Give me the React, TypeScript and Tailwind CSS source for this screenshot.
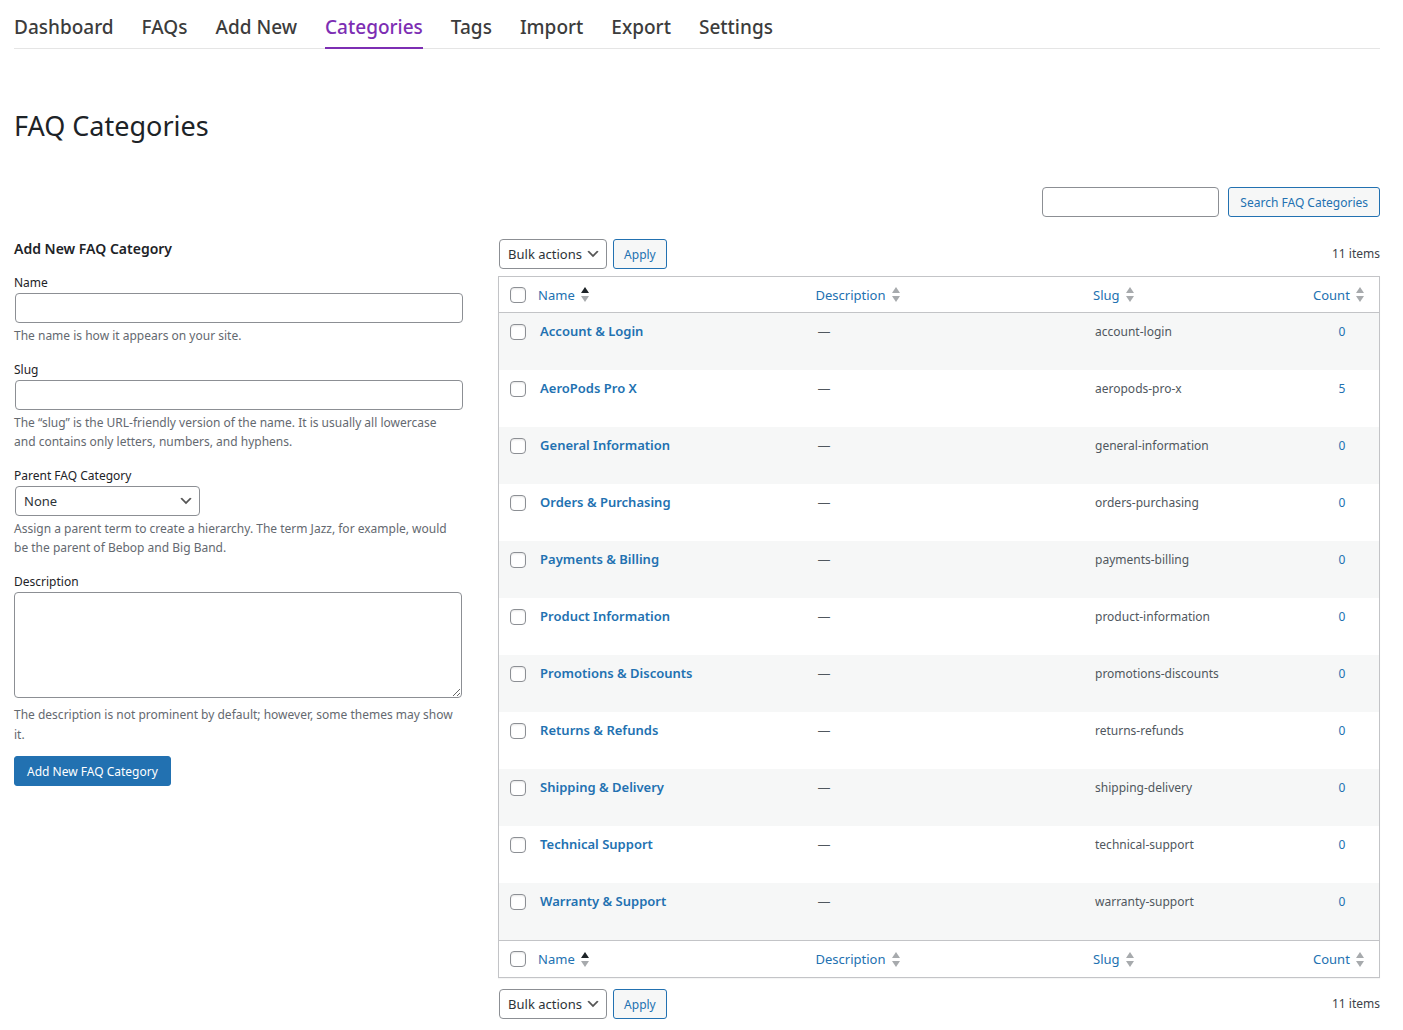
import type { ReactNode } from "react";

const navItems = ["Dashboard", "FAQs", "Add New", "Categories", "Tags", "Import", "Export", "Settings"];

const categories = [
  { name: "Account & Login", slug: "account-login", count: 0 },
  { name: "AeroPods Pro X", slug: "aeropods-pro-x", count: 5 },
  { name: "General Information", slug: "general-information", count: 0 },
  { name: "Orders & Purchasing", slug: "orders-purchasing", count: 0 },
  { name: "Payments & Billing", slug: "payments-billing", count: 0 },
  { name: "Product Information", slug: "product-information", count: 0 },
  { name: "Promotions & Discounts", slug: "promotions-discounts", count: 0 },
  { name: "Returns & Refunds", slug: "returns-refunds", count: 0 },
  { name: "Shipping & Delivery", slug: "shipping-delivery", count: 0 },
  { name: "Technical Support", slug: "technical-support", count: 0 },
  { name: "Warranty & Support", slug: "warranty-support", count: 0 },
];

const inputClass = "block h-[30px] rounded border border-[#8c8f94] bg-white px-2 text-[13px] text-[#2c3338]";
const buttonClass =
  "h-[30px] rounded-[3px] border border-[#2271b1] bg-[#f6f7f7] pt-0.5 text-[12px] whitespace-nowrap text-[#2271b1]";

function Select({ id, label, options, className }: { id: string; label?: string; options: string[]; className: string }) {
  return (
    <div className={`relative ${className}`}>
      <select id={id} aria-label={label} className={`${inputClass} w-full appearance-none pt-px pr-6`}>
        {options.map((option) => (
          <option key={option}>{option}</option>
        ))}
      </select>
      <svg
        className="pointer-events-none absolute top-[7px] right-[6px] size-4"
        viewBox="0 0 20 20"
        fill="#555"
        aria-hidden="true"
      >
        <path d="M5 6l5 5 5-5 2 1-7 7-7-7 2-1z" />
      </svg>
    </div>
  );
}

function Checkbox({ label }: { label: string }) {
  return (
    <input
      type="checkbox"
      aria-label={label}
      className="block size-4 appearance-none rounded border border-[#8c8f94] bg-white shadow-[inset_0_1px_2px_rgba(0,0,0,0.1)] checked:bg-[#2271b1]"
    />
  );
}

function SortIcon({ active }: { active?: boolean }) {
  return (
    <svg className="h-[15px] w-2 shrink-0" viewBox="0 0 8 15" aria-hidden="true">
      <path d="M4 0L8 6H0z" fill={active ? "#1d2327" : "#a7aaad"} />
      <path d="M0 9h8L4 15z" fill="#a7aaad" />
    </svg>
  );
}

function HeadingRow({ edge, position }: { edge: string; position: string }) {
  const cell = `p-0 align-middle font-normal ${edge}`;
  const link = "flex items-center gap-[6px] px-2 text-[13px] leading-5 text-[#2271b1]";
  return (
    <tr>
      <td className={`${cell} w-[31px]`}>
        <div className="pl-[11px]">
          <Checkbox label={`Select all, ${position}`} />
        </div>
      </td>
      <th scope="col" className={cell}>
        <a href="#name" className={link}>
          Name <SortIcon active />
        </a>
      </th>
      <th scope="col" className={cell}>
        <a href="#description" className={link}>
          Description <SortIcon />
        </a>
      </th>
      <th scope="col" className={`${cell} w-1/4`}>
        <a href="#slug" className={link}>
          Slug <SortIcon />
        </a>
      </th>
      <th scope="col" className={`${cell} w-[74px]`}>
        <a href="#count" className={link}>
          Count <SortIcon />
        </a>
      </th>
    </tr>
  );
}

function BulkActions({ position }: { position: string }) {
  return (
    <div className="flex items-center justify-between pl-px">
      <div className="flex gap-[6px]">
        <Select
          id={`bulk-${position}`}
          label="Select bulk action"
          options={["Bulk actions", "Delete"]}
          className="w-[108px]"
        />
        <button type="button" className={`${buttonClass} px-[10px]`}>
          Apply
        </button>
      </div>
      <span className="text-[12px] text-[#3c434a]">11 items</span>
    </div>
  );
}

function Field({ id, label, help, children }: { id: string; label: string; help: string; children: ReactNode }) {
  return (
    <div className="mb-[14px]">
      <label htmlFor={id} className="block pt-px text-[12px] leading-5">
        {label}
      </label>
      {children}
      <p className="mt-[3px] pr-1 text-[12px] leading-[19px] text-[#646970]">{help}</p>
    </div>
  );
}

export default function App() {
  return (
    <div className="min-h-screen bg-white pr-[23px] pb-[11px] pl-[14px] font-['Segoe_UI','Noto_Sans',sans-serif] text-[13px] text-[#1d2327]">
      <nav className="flex gap-7 border-b border-[#e5e5e5] pt-[9px]">
        {navItems.map((item) => (
          <a
            key={item}
            href={`#${item.toLowerCase().replace(" ", "-")}`}
            className={`-mb-px border-b-2 pb-0.5 text-[19px] leading-9 font-medium whitespace-nowrap ${
              item === "Categories" ? "border-[#7d2eb3] text-[#7d2eb3]" : "border-transparent text-[#3c3c3c]"
            }`}
          >
            {item}
          </a>
        ))}
      </nav>

      <h1 className="mt-[59px] text-[27px] leading-9 font-normal">FAQ Categories</h1>

      <form className="mt-[43px] flex justify-end gap-[9px]">
        <input type="search" aria-label="Search FAQ Categories" className={`${inputClass} w-[177px]`} />
        <button type="button" className={`${buttonClass} px-[11px]`}>
          Search FAQ Categories
        </button>
      </form>

      <main className="mt-[22px] flex">
        <form className="w-[35%] pr-[30px]">
          <h2 className="mb-[13px] text-[14px] leading-5 font-semibold">Add New FAQ Category</h2>
          <Field id="name" label="Name" help="The name is how it appears on your site.">
            <input id="name" type="text" className={`${inputClass} ml-px w-full`} />
          </Field>
          <Field
            id="slug"
            label="Slug"
            help="The “slug” is the URL-friendly version of the name. It is usually all lowercase and contains only letters, numbers, and hyphens."
          >
            <input id="slug" type="text" className={`${inputClass} ml-px w-full`} />
          </Field>
          <Field
            id="parent"
            label="Parent FAQ Category"
            help="Assign a parent term to create a hierarchy. The term Jazz, for example, would be the parent of Bebop and Big Band."
          >
            <Select id="parent" options={["None"]} className="ml-px w-[185px]" />
          </Field>
          <label htmlFor="description" className="block pt-px text-[12px] leading-5">
            Description
          </label>
          <textarea
            id="description"
            className="block h-[106px] w-full rounded border border-[#8c8f94] px-2 py-1 text-[13px]"
          />
          <p className="mt-[7px] text-[12px] leading-5 text-[#646970]">
            The description is not prominent by default; however, some themes may show it.
          </p>
          <button
            type="button"
            className="mt-[11px] h-[30px] rounded-[3px] border border-[#2271b1] bg-[#2271b1] px-3 pt-0.5 text-[12px] text-white"
          >
            Add New FAQ Category
          </button>
        </form>

        <section className="w-[65%] pl-[6px]">
          <BulkActions position="top" />
          <table className="mt-[7px] mb-[11px] w-full table-fixed border-separate border-spacing-0 border border-[#c3c4c7] text-left shadow-[0_1px_1px_rgba(0,0,0,0.04)]">
            <thead>
              <HeadingRow edge="h-9 border-b border-[#c3c4c7]" position="top" />
            </thead>
            <tbody>
              {categories.map((category) => (
                <tr key={category.slug} className="align-top leading-5 odd:bg-[#f6f7f7]">
                  <td className="h-[57px] p-0 pt-[11px] pl-[11px]">
                    <Checkbox label={`Select ${category.name}`} />
                  </td>
                  <td className="px-[10px] py-2">
                    <a href={`#${category.slug}`} className="text-[13px] font-semibold text-[#2271b1]">
                      {category.name}
                    </a>
                  </td>
                  <td className="px-[10px] py-2 text-[#50575e]">—</td>
                  <td className="px-[10px] pt-[9px] text-[12px] leading-5 text-[#50575e]">{category.slug}</td>
                  <td className="pt-[9px] text-center text-[12px] leading-5">
                    <a href={`#${category.slug}-posts`} className="text-[#2271b1]">
                      {category.count}
                    </a>
                  </td>
                </tr>
              ))}
            </tbody>
            <tfoot>
              <HeadingRow edge="h-[37px] border-t border-[#c3c4c7]" position="bottom" />
            </tfoot>
          </table>
          <BulkActions position="bottom" />
        </section>
      </main>
    </div>
  );
}
